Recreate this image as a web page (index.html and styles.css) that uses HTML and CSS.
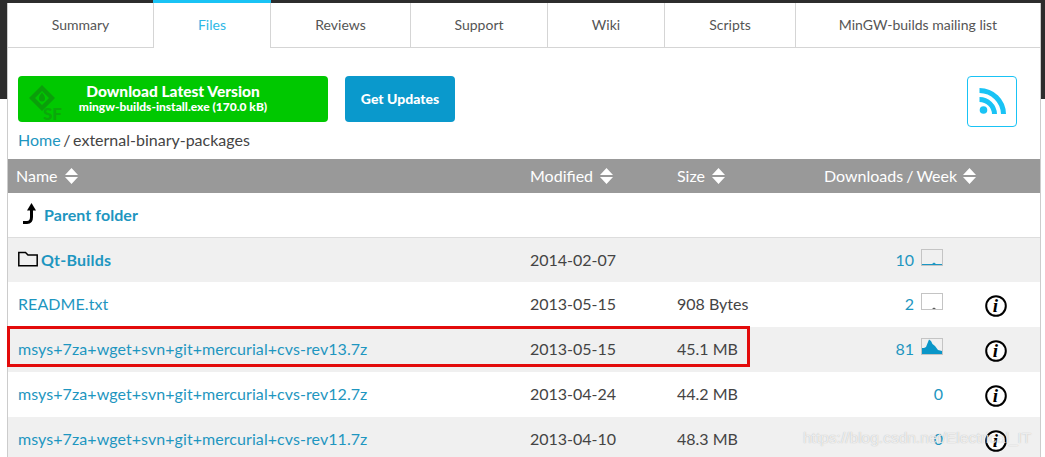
FILE: index.html
```html
<!DOCTYPE html>
<html lang="en">
<head>
<meta charset="utf-8">
<title>MinGW-builds Files</title>
<link rel="stylesheet" href="styles.css">
</head>
<body>
<main class="page">
  <nav class="tabs">
    <a class="tab tab-summary">Summary</a>
    <a class="tab tab-files active">Files</a>
    <a class="tab tab-reviews">Reviews</a>
    <a class="tab tab-support">Support</a>
    <a class="tab tab-wiki">Wiki</a>
    <a class="tab tab-scripts">Scripts</a>
    <a class="tab tab-list">MinGW-builds mailing list</a>
  </nav>

  <section class="actions">
    <a class="btn-download">
      <svg class="sf-logo" width="36" height="37" viewBox="0 0 36 37">
        <path d="M14 0 L27 13 L14 26 L1 13 Z M14 6 L7 13 L14 20 L21 13 Z" fill="#0a9f0a" fill-rule="evenodd"/>
        <path d="M14 7.500 C15.500 9.500 17 11 17 13.500 A3 3 0 0 1 11 13.500 C11 11 12.500 9.500 14 7.500 Z" fill="#0a9f0a"/>
        <text x="15" y="35" class="sf-text">SF</text>
      </svg>
      <span class="btn-title">Download Latest Version</span>
      <span class="btn-sub">mingw-builds-install.exe (170.0 kB)</span>
    </a>
    <a class="btn-updates">Get Updates</a>
    <a class="btn-rss">
      <svg width="30" height="30" viewBox="0 0 30 30">
        <circle cx="6.500" cy="23" r="3.800" fill="#19c3f5"/>
        <path d="M2.500 12.500 A15 15 0 0 1 17.500 27" fill="none" stroke="#19c3f5" stroke-width="5"/>
        <path d="M2.500 3.500 A24 24 0 0 1 26.500 27" fill="none" stroke="#19c3f5" stroke-width="5"/>
      </svg>
    </a>
  </section>

  <p class="crumbs"><a class="link">Home</a> / external-binary-packages</p>

  <div class="listing">
    <div class="row head">
      <span class="cell-name">Name <svg class="sort" width="13" height="16" viewBox="0 0 13 16"><path d="M6.500 0 L13 7 H0 Z M0 9 H13 L6.500 16 Z" fill="#fff"/></svg></span>
      <span>Modified <svg class="sort" width="13" height="16" viewBox="0 0 13 16"><path d="M6.500 0 L13 7 H0 Z M0 9 H13 L6.500 16 Z" fill="#fff"/></svg></span>
      <span>Size <svg class="sort" width="13" height="16" viewBox="0 0 13 16"><path d="M6.500 0 L13 7 H0 Z M0 9 H13 L6.500 16 Z" fill="#fff"/></svg></span>
      <span class="head-dl">Downloads / Week <svg class="sort" width="13" height="16" viewBox="0 0 13 16"><path d="M6.500 0 L13 7 H0 Z M0 9 H13 L6.500 16 Z" fill="#fff"/></svg></span>
    </div>

    <div class="row parent">
      <a class="cell-name link strong">
        <svg class="up-icon" width="18" height="24" viewBox="0 0 18 24"><path d="M3 20.500 H7 C10 20.500 11.500 18.500 11.500 15 V7" fill="none" stroke="#000" stroke-width="3"/><path d="M11.500 1 L16 8.500 H7 Z" fill="#000"/></svg>
        Parent folder
      </a>
    </div>

    <div class="row folder even">
      <a class="cell-name link strong">
        <svg class="folder-icon" width="20" height="16" viewBox="0 0 20 16"><path d="M0.800 14.700 V1.500 H7.500 L10 4 H19.200 V14.700 Z" fill="none" stroke="#000" stroke-width="1.500"/></svg>Qt-Builds
      </a>
      <span>2014-02-07</span>
      <span></span>
      <span class="dl"><a class="link">10</a>
        <svg class="spark" width="22" height="17" viewBox="0 0 22 17"><rect x="0.500" y="0.500" width="21" height="16" fill="none" stroke="#c4c4c4"/><path d="M1 15 H11 L13 13.500 L15 15 H21 V16 H1 Z" fill="#1a97c4"/></svg>
      </span>
    </div>

    <div class="row">
      <a class="cell-name link">README.txt</a>
      <span>2013-05-15</span>
      <span>908 Bytes</span>
      <span class="dl"><a class="link">2</a>
        <svg class="spark" width="22" height="17" viewBox="0 0 22 17"><rect x="0.500" y="0.500" width="21" height="16" fill="none" stroke="#c4c4c4"/><path d="M11 16 L13 14.500 L15 16 Z" fill="#555"/></svg>
      </span>
      <span class="info"><svg width="22" height="22" viewBox="0 0 22 22"><circle cx="11" cy="11" r="9.800" fill="#fff" stroke="#000" stroke-width="2"/><text x="10.500" y="17" class="info-i">i</text></svg></span>
    </div>

    <div class="row even">
      <a class="cell-name link">msys+7za+wget+svn+git+mercurial+cvs-rev13.7z</a>
      <span>2013-05-15</span>
      <span>45.1 MB</span>
      <span class="dl"><a class="link">81</a>
        <svg class="spark" width="22" height="17" viewBox="0 0 22 17"><rect x="0.500" y="0.500" width="21" height="16" fill="none" stroke="#c4c4c4"/><path d="M1 16 V10 L3 10 L5 9 L8 1.500 L10 3 L11.500 6 L14 8 L17 12 L21 13 V16 Z" fill="#0a96c8"/></svg>
      </span>
      <span class="info"><svg width="22" height="22" viewBox="0 0 22 22"><circle cx="11" cy="11" r="9.800" fill="#fff" stroke="#000" stroke-width="2"/><text x="10.500" y="17" class="info-i">i</text></svg></span>
    </div>

    <div class="row">
      <a class="cell-name link">msys+7za+wget+svn+git+mercurial+cvs-rev12.7z</a>
      <span>2013-04-24</span>
      <span>44.2 MB</span>
      <span class="dl"><a class="link dl-only">0</a></span>
      <span class="info"><svg width="22" height="22" viewBox="0 0 22 22"><circle cx="11" cy="11" r="9.800" fill="#fff" stroke="#000" stroke-width="2"/><text x="10.500" y="17" class="info-i">i</text></svg></span>
    </div>

    <div class="row even">
      <a class="cell-name link">msys+7za+wget+svn+git+mercurial+cvs-rev11.7z</a>
      <span>2013-04-10</span>
      <span>48.3 MB</span>
      <span class="dl"><a class="link dl-only">0</a></span>
      <span class="info"><svg width="22" height="22" viewBox="0 0 22 22"><circle cx="11" cy="11" r="9.800" fill="#fff" stroke="#000" stroke-width="2"/><text x="10.500" y="17" class="info-i">i</text></svg></span>
    </div>
  </div>
</main>
<div class="highlight"></div>
<div class="watermark">https://blog.csdn.net/Electrical_IT</div>
</body>
</html>
```
FILE: styles.css
```css
html, body {
  margin: 0;
  height: 457px;
  overflow: hidden;
}
body {
  position: relative;
  background: linear-gradient(#2d2d2d 99px, #fff 99px);
  font-family: Lato, "Liberation Sans", sans-serif;
  font-size: 16px;
  color: #444;
}
.page {
  margin: 3px 4px 0 7px;
  height: 454px;
  background: #fff;
  border-left: 1px solid #ccc;
  border-right: 1px solid #ccc;
}
.link { color: #1e96c0; text-decoration: none; }
.strong { font-weight: 700; }

.tabs {
  display: flex;
  height: 44px;
  border-bottom: 1px solid #d5d5d5;
}
.tab {
  display: flex;
  align-items: center;
  justify-content: center;
  box-sizing: border-box;
  height: 44px;
  padding-bottom: 2px;
  font-size: 14px;
  color: #555;
  border-right: 1px solid #d5d5d5;
}
.tab-summary { width: 146px; }
.tab-files { width: 117px; }
.tab-reviews { width: 140px; }
.tab-support { width: 137px; }
.tab-wiki { width: 117px; }
.tab-scripts { width: 131px; }
.tab-list { flex: 1; border-right: 0; }
.tab.active {
  position: relative;
  height: 45px;
  color: #2fb8e6;
  background: #fff;
  border-left: 1px solid #d5d5d5;
  margin-left: -1px;
  width: 118px;
}
.tab.active::before {
  content: "";
  position: absolute;
  left: -1px;
  right: -1px;
  top: -3px;
  height: 3px;
  background: #19c3f5;
}

.actions {
  display: flex;
  align-items: flex-start;
  padding: 28px 23px 0 10px;
  height: 52px;
}
.btn-download {
  position: relative;
  box-sizing: border-box;
  width: 310px;
  height: 46px;
  padding-top: 7px;
  background: #00c800;
  border-radius: 4px;
  color: #fff;
  text-align: center;
  font-weight: 900;
  display: flex;
  flex-direction: column;
  align-items: center;
}
.sf-logo { position: absolute; left: 10px; top: 9px; }
.sf-text { font-size: 17px; font-weight: 900; fill: #0aa80a; }
.btn-title { font-size: 15.500px; line-height: 17px; }
.btn-sub { font-size: 12px; line-height: 13px; }
.btn-updates {
  display: flex;
  align-items: center;
  justify-content: center;
  box-sizing: border-box;
  width: 110px;
  height: 46px;
  margin-left: 17px;
  padding-bottom: 2px;
  background: #0a99cc;
  border-radius: 4px;
  color: #fff;
  font-size: 14px;
  font-weight: 900;
}
.btn-rss {
  display: flex;
  align-items: center;
  justify-content: center;
  box-sizing: border-box;
  width: 50px;
  height: 51px;
  margin-left: auto;
  border: 1px solid #19c3f5;
  border-radius: 4px;
}
.crumbs {
  margin: 0;
  padding: 0 10px;
  height: 31px;
  line-height: 23px;
  word-spacing: -1.500px;
}
.row {
  display: grid;
  grid-template-columns: 522px 147px 100px 166px 106px;
  align-items: center;
  box-sizing: border-box;
  height: 45px;
  padding-bottom: 2px;
}
.row.even { background: #f0f0f0; }
.cell-name { padding-left: 10px; letter-spacing: .07px; }
.row.head {
  grid-template-columns: 522px 147px 147px 1fr;
  height: 34px;
  background: #999;
  color: #fff;
  white-space: nowrap;
}
.head .cell-name { padding-left: 8px; letter-spacing: 0; }
.head-dl { word-spacing: -1px; }
.sort { margin-left: 3px; vertical-align: -2px; }
.row.parent {
  height: 45px;
  border-bottom: 1px solid #ddd;
}
.parent .cell-name { display: flex; align-items: center; gap: 6px; }
.up-icon { margin-left: 2px; }
.folder { height: 44px; }
.folder .cell-name { display: flex; align-items: center; gap: 3px; letter-spacing: .2px; }
.folder-icon { flex: none; }
.dl {
  display: flex;
  align-items: center;
  justify-content: flex-end;
  gap: 7px;
}
.spark { margin-top: -4px; }
.info { display: flex; justify-content: center; margin-top: 5px; }
.info-i {
  font-family: "Liberation Serif", serif;
  font-style: italic;
  font-weight: 700;
  font-size: 19px;
  text-anchor: middle;
  fill: #000;
}
.highlight {
  position: absolute;
  left: 7px;
  top: 326px;
  box-sizing: border-box;
  width: 743px;
  height: 41px;
  border: 3px solid #e30b0b;
}
.watermark {
  position: absolute;
  left: 803px;
  top: 429px;
  font-family: "Liberation Sans", sans-serif;
  font-size: 15.500px;
  color: rgba(255,255,255,.75);
  text-shadow: 0 0 1px rgba(120,120,120,.55);
  white-space: nowrap;
}
```
